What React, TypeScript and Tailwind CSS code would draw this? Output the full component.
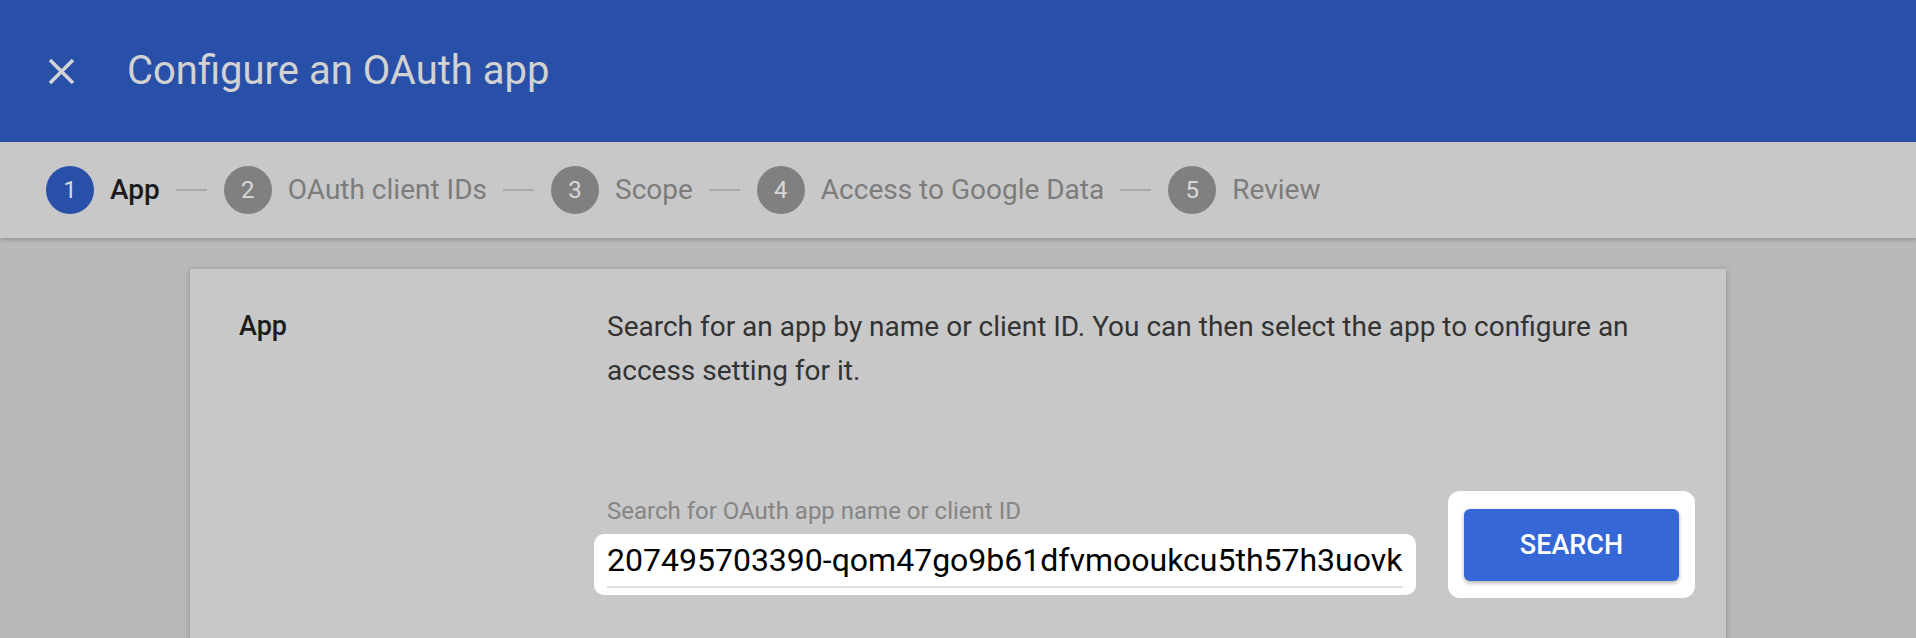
const steps = ['App', 'OAuth client IDs', 'Scope', 'Access to Google Data', 'Review'];

function CloseIcon() {
    return (
        <svg width="27" height="27" viewBox="0 0 27 27" fill="none">
            <path d="M2 2L25 25M25 2L2 25" stroke="#d4d4d4" strokeWidth="3.5" />
        </svg>
    );
}

export default function App() {
    return (
        <div className="flex min-h-[638px] flex-col bg-[#b9b9b9] font-['Roboto',sans-serif]">
            {/* header */}
            <header className="flex h-[142px] items-center gap-[52px] bg-[#2850a8] pl-[48px]">
                <CloseIcon />
                <h1 className="text-[40px] font-normal text-[#d2d2d2]">Configure an OAuth app</h1>
            </header>

            {/* stepper */}
            <nav className="relative z-10 flex h-[96px] items-center bg-[#c8c8c8] pl-[46px] shadow-[0_2px_4px_rgba(0,0,0,0.2)]">
                {steps.map((s, i) => (
                    <div key={s} className="flex items-center">
                        {i > 0 && <div className="ml-[16px] mr-[17px] h-[2px] w-[31px] bg-[#a8a8a8]" />}
                        <div
                            className={
                                i === 0
                                    ? 'flex h-[48px] w-[48px] items-center justify-center rounded-full bg-[#2850a8] text-[24px] text-[#d8d8d8]'
                                    : 'flex h-[48px] w-[48px] items-center justify-center rounded-full bg-[#808080] text-[24px] text-[#d8d8d8]'
                            }
                        >
                            {i + 1}
                        </div>
                        <span
                            className={
                                i === 0
                                    ? 'ml-[16px] text-[28px] font-medium text-[#1c1c1c]'
                                    : 'ml-[16px] text-[28px] text-[#7c7c7c]'
                            }
                        >
                            {s}
                        </span>
                    </div>
                ))}
            </nav>

            {/* card */}
            <main className="flex-1 pt-[31px]">
                <section className="mx-auto flex w-[1536px] bg-[#c8c8c8] pb-[60px] pl-[49px] pr-[60px] pt-[36px] shadow-[0_1px_6px_rgba(0,0,0,0.25)]">
                    <div className="w-[368px] shrink-0 text-[27px] font-medium leading-[43px] text-[#1c1c1c]">App</div>
                    <div className="flex-1">
                        <p className="text-[28px] leading-[44px] text-[#333333]">
                            Search for an app by name or client ID. You can then select the app to configure an access
                            setting for it.
                        </p>
                        <div className="mt-[98px] flex items-end">
                            <div className="mb-[3px]">
                                <label className="block text-[24px] leading-[30px] text-[#858585]">
                                    Search for OAuth app name or client ID
                                </label>
                                <div className="-ml-[13px] mt-[8px] w-[822px] rounded-[10px] bg-white px-[13px] pb-[7px] pt-[6px]">
                                    <input
                                        readOnly
                                        value="207495703390-qom47go9b61dfvmooukcu5th57h3uovk3.apps.googleusercontent.com"
                                        className="w-full border-b-2 border-[#e0e0e0] bg-transparent pb-[6px] text-[32px] leading-[40px] text-black outline-none"
                                    />
                                </div>
                            </div>
                            <div className="ml-[32px] rounded-[12px] bg-white px-[16px] pb-[17px] pt-[18px]">
                                <button className="flex h-[72px] w-[215px] items-center justify-center rounded-[6px] bg-[#3567d6] text-[27px] font-medium text-white shadow-[0_2px_4px_rgba(0,0,0,0.3)]">
                                    SEARCH
                                </button>
                            </div>
                        </div>
                    </div>
                </section>
            </main>
        </div>
    );
}
